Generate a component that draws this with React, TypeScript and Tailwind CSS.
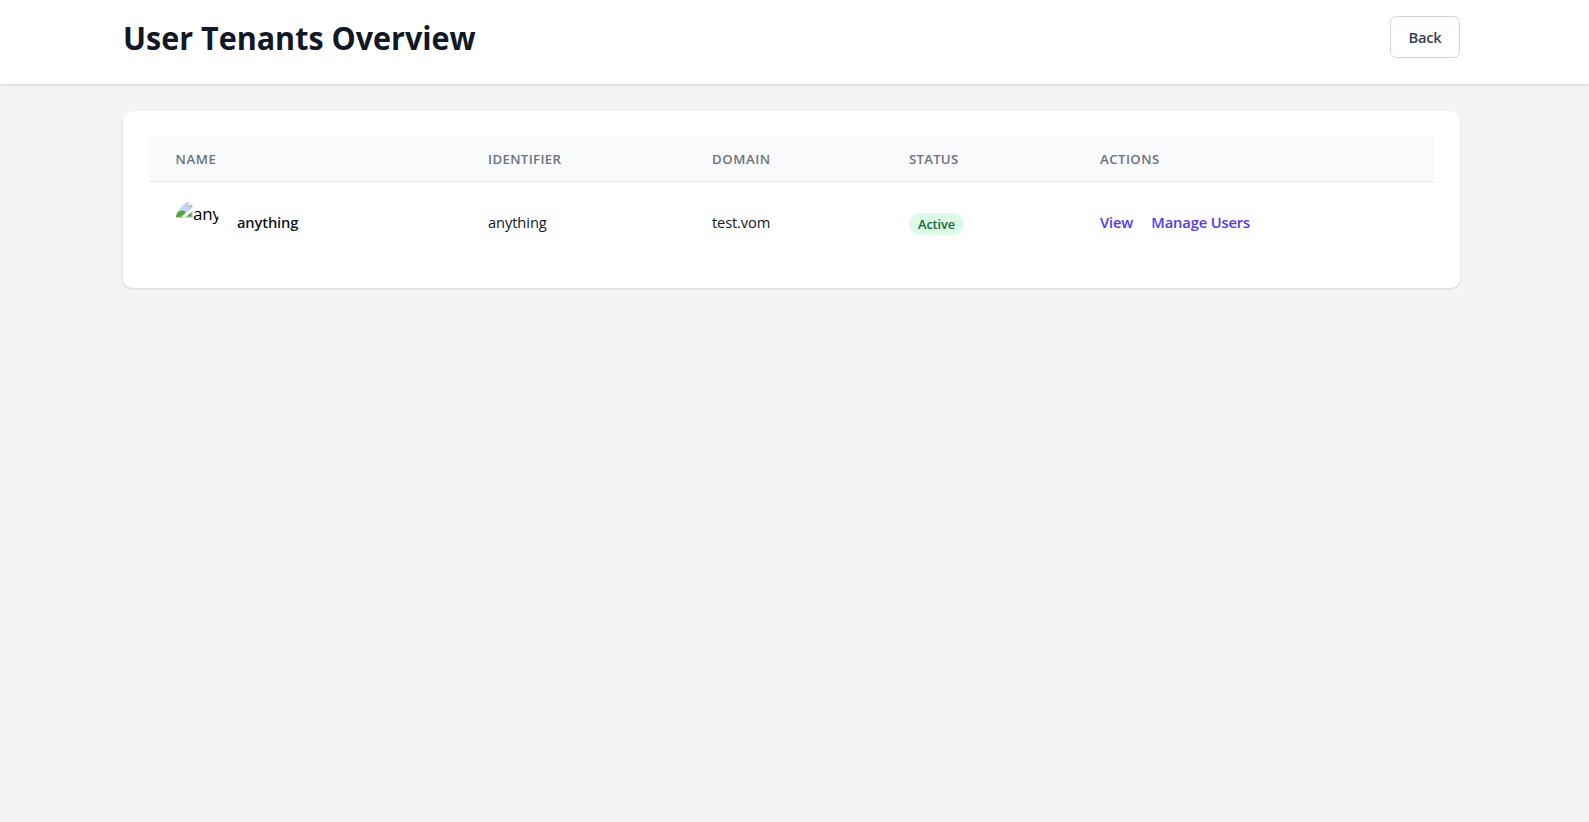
const columns = [
  { label: "Name", style: "w-[313px] pl-[26.5px] tracking-[0.6px]" },
  { label: "Identifier", style: "w-[224px] pl-[26px] tracking-[0.37px]" },
  { label: "Domain", style: "w-[197px] pl-[26px] tracking-[0.58px]" },
  { label: "Status", style: "w-[191px] pl-[26px] tracking-[0.25px]" },
  { label: "Actions", style: "pl-[26px] tracking-[0.45px]" },
];

function BrokenImageIcon() {
  return (
    <svg width="18" height="18" viewBox="0 0 18 18" className="shrink-0">
      <path d="M1 1h11l5 5v11H1z" fill="#c3d5f7" stroke="#a4a7ab" />
      <path d="M12 1v5h5" fill="#fff" stroke="#a4a7ab" />
      <path d="M1 16.5C2 11 7 9 11 12l-5 5H1z" fill="#56aa38" />
      <path d="M18 7 7 17h3l8-6z" fill="#fff" />
      <path d="M11.5 16.5l5-4v4z" fill="#56aa38" />
    </svg>
  );
}

export default function App() {
  return (
    <div className="min-h-screen bg-[#f3f4f6] font-['Open_Sans',sans-serif] text-[14.7px] text-[#111827]">
      <header className="h-[84px] bg-white pt-4 shadow-[0_1px_3px_rgba(0,0,0,0.1),0_1px_2px_-1px_rgba(0,0,0,0.1)]">
        <div className="ml-[123px] flex w-[1337px] items-start justify-between">
          <h1 className="origin-left scale-x-[0.924] pt-[2px] text-[33px] leading-[40px] font-bold whitespace-nowrap">User Tenants Overview</h1>
          <button className="h-[42px] w-[70px] rounded-[6.6px] border border-[#d1d5db] bg-white text-[14.7px] font-semibold tracking-[-0.2px] text-[#374151]">
            Back
          </button>
        </div>
      </header>
      <main className="mt-[27px] ml-[123px] h-[177px] w-[1337px] rounded-[9px] bg-white p-[26px] shadow-[0_1px_3px_rgba(0,0,0,0.1),0_1px_2px_-1px_rgba(0,0,0,0.1)]">
        <table className="w-full table-fixed border-collapse text-left">
          <thead>
            <tr className="h-[44px] border-b border-[#e5e7eb] bg-[#f9fafb]">
              {columns.map((c) => (
                <th key={c.label} className={`${c.style} pt-[2px] text-[13.2px] font-semibold text-[#6b7280] uppercase`}>
                  {c.label}
                </th>
              ))}
            </tr>
          </thead>
          <tbody>
            <tr className="h-[81px] whitespace-nowrap">
              <td className="pl-[26px]">
                <div className="flex items-center">
                  <div className="flex h-11 w-11 items-start overflow-hidden rounded-full text-[17px] leading-[28px] tracking-[-0.2px] text-black">
                    <BrokenImageIcon />
                    <span>any</span>
                  </div>
                  <span className="ml-[18px] font-semibold tracking-[-0.15px]">anything</span>
                </div>
              </td>
              <td className="pl-[26px] tracking-[-0.1px]">anything</td>
              <td className="pl-[26px] tracking-[-0.15px]">test.vom</td>
              <td className="pt-[2px] pl-[26px]">
                <span className="mt-[3px] inline-flex h-[22px] w-[55px] items-center justify-center rounded-full bg-[#dcfce7] pt-px text-[12.8px] font-semibold tracking-[-0.15px] text-[#166534]">
                  Active
                </span>
              </td>
              <td className="pl-[26px] font-semibold tracking-[-0.12px] text-[#4f39f6]">
                <a className="mr-[18px]">View</a>
                <a>Manage Users</a>
              </td>
            </tr>
          </tbody>
        </table>
      </main>
    </div>
  );
}
